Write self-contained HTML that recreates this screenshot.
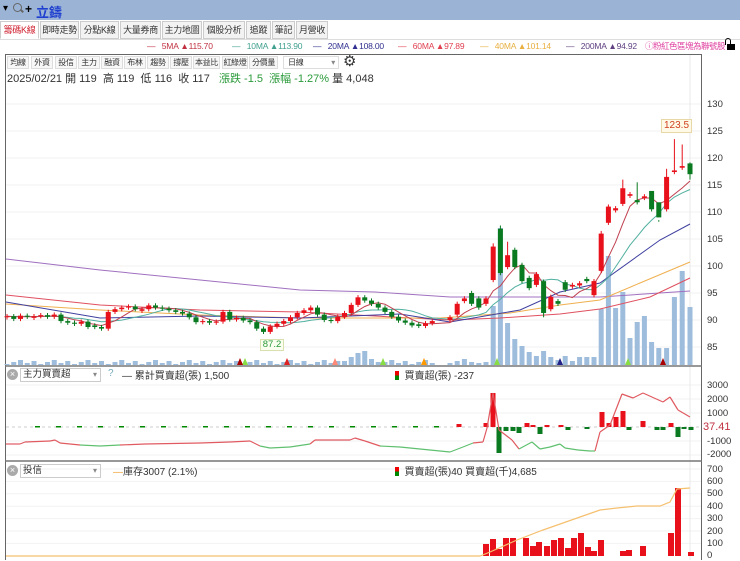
<!DOCTYPE html>
<html><head><meta charset="utf-8">
<style>
*{margin:0;padding:0;box-sizing:border-box}
body{width:740px;height:560px;overflow:hidden;background:#fff;font-family:"Liberation Sans","Noto Sans CJK TC",sans-serif;font-size:11px;color:#333;position:relative}
.a{position:absolute;white-space:nowrap}
#top{position:absolute;left:0;top:0;width:740px;height:20px;background:#9bb4d6}
.tab{position:absolute;top:21px;height:18px;border:1px solid #ccc;background:#f3f3f3;font-size:9px;line-height:16px;text-align:center;color:#333;white-space:nowrap;overflow:hidden;letter-spacing:-0.3px}
.tb{position:absolute;top:56px;height:13px;border:1px solid #ddd;background:#f7f7f7;font-size:8px;line-height:11px;text-align:center;color:#333;white-space:nowrap;overflow:hidden;letter-spacing:-0.3px}
.ax{position:absolute;left:707px;font-size:9.5px;color:#333}
.lg{position:absolute;top:41px;font-size:8.5px;white-space:nowrap;letter-spacing:-0.2px}
</style></head><body>
<div id="top"></div>
<div class="a" style="left:3px;top:3px;font-size:10px;color:#000">▾</div>
<div class="a" style="left:13px;top:3px;width:9px;height:9px;border:1.5px solid #666;border-radius:50%"></div>
<div class="a" style="left:20px;top:10px;width:4px;height:1.5px;background:#666;transform:rotate(45deg)"></div>
<div class="a" style="left:25px;top:2px;font-size:12px;font-weight:bold;color:#000">+</div>
<div class="a" style="left:36px;top:2px;font-size:13px;font-weight:bold;color:#1f3fd0">立鑄</div>

<div class="tab" style="left:0;width:39px;background:#fff;color:#d02030;border-bottom-color:#fff">籌碼K線</div>
<div class="tab" style="left:40px;width:39px">即時走勢</div>
<div class="tab" style="left:80px;width:39px">分點K線</div>
<div class="tab" style="left:120px;width:41px">大量券商</div>
<div class="tab" style="left:162px;width:40px">主力地圖</div>
<div class="tab" style="left:203px;width:42px">個股分析</div>
<div class="tab" style="left:246px;width:25px">追蹤</div>
<div class="tab" style="left:272px;width:23px">筆記</div>
<div class="tab" style="left:296px;width:32px">月營收</div>
<div class="a" style="left:0;top:39px;width:740px;height:1px;background:#ddd"></div>

<div class="lg" style="left:147px;color:#c03040">—&nbsp;&nbsp;&nbsp;5MA ▲115.70</div>
<div class="lg" style="left:232px;color:#40a090">—&nbsp;&nbsp;&nbsp;10MA ▲113.90</div>
<div class="lg" style="left:313px;color:#303090">—&nbsp;&nbsp;&nbsp;20MA ▲108.00</div>
<div class="lg" style="left:398px;color:#e04050">—&nbsp;&nbsp;&nbsp;60MA ▲97.89</div>
<div class="lg" style="left:480px;color:#e8b040">—&nbsp;&nbsp;&nbsp;40MA ▲101.14</div>
<div class="lg" style="left:566px;color:#604080">—&nbsp;&nbsp;&nbsp;200MA ▲94.92</div>
<div class="lg" style="left:645px;top:40px;color:#e040a0;letter-spacing:-0.5px">ⓘ粉紅色區塊為聯號股</div>
<div class="a" style="left:727px;top:44px;width:8px;height:6px;background:#000"></div>
<div class="a" style="left:725px;top:38px;width:6px;height:7px;border:1.5px solid #000;border-bottom:none;border-radius:3px 3px 0 0"></div>

<div class="a" style="left:5px;top:54px;width:697px;height:506px;border-left:1px solid #666;border-top:1px solid #666;border-right:1px solid #666"></div>

<div class="tb" style="left:7px;width:22px">均線</div>
<div class="tb" style="left:31px;width:22px">外資</div>
<div class="tb" style="left:55px;width:22px">投信</div>
<div class="tb" style="left:78px;width:22px">主力</div>
<div class="tb" style="left:101px;width:22px">融資</div>
<div class="tb" style="left:124px;width:22px">布林</div>
<div class="tb" style="left:147px;width:22px">趨勢</div>
<div class="tb" style="left:170px;width:22px">撐壓</div>
<div class="tb" style="left:193px;width:27px">本益比</div>
<div class="tb" style="left:222px;width:26px">紅綠燈</div>
<div class="tb" style="left:249px;width:29px">分價量</div>
<div class="tb" style="left:283px;width:56px;background:#fff;text-align:left;padding-left:4px">日線<span style="position:absolute;right:3px;color:#888">▾</span></div>
<div class="a" style="left:343px;top:52px;font-size:15px;color:#333">⚙</div>
<div class="a" style="left:7px;top:70px;font-size:11px;color:#333">2025/02/21 開 119&nbsp; 高 119&nbsp; 低 116&nbsp; 收 117&nbsp;&nbsp; <span style="color:#2a9a3a">漲跌 -1.5&nbsp; 漲幅 -1.27%</span> 量 4,048</div>

<div class="ax" style="top:99px">130</div><div class="ax" style="top:126px">125</div><div class="ax" style="top:153px">120</div><div class="ax" style="top:180px">115</div><div class="ax" style="top:207px">110</div><div class="ax" style="top:234px">105</div><div class="ax" style="top:261px">100</div><div class="ax" style="top:288px">95</div><div class="ax" style="top:315px">90</div><div class="ax" style="top:342px">85</div>
<div class="ax" style="top:380px">3000</div><div class="ax" style="top:394px">2000</div><div class="ax" style="top:408px">1000</div><div class="ax" style="left:703px;top:421px;font-size:11px;color:#c03040">37.41</div><div class="ax" style="top:436px">-1000</div><div class="ax" style="top:449px">-2000</div>
<div class="ax" style="top:464px">700</div><div class="ax" style="top:476px">600</div><div class="ax" style="top:488px">500</div><div class="ax" style="top:501px">400</div><div class="ax" style="top:513px">300</div><div class="ax" style="top:526px">200</div><div class="ax" style="top:538px">100</div><div class="ax" style="top:550px">0</div>

<svg id="g" class="a" style="left:0;top:0" width="740" height="560"></svg>

<div class="a" style="left:661px;top:119px;width:31px;height:14px;background:#fffae8;border:1px solid #e8d8a8;color:#d04020;font-size:10px;line-height:12px;text-align:center">123.5</div>
<div class="a" style="left:260px;top:339px;width:24px;height:12px;background:#fbfff0;border:1px solid #d8e0b0;color:#2a9a3a;font-size:9.5px;line-height:10px;text-align:center">87.2</div>

<div class="a" style="left:7px;top:369px;width:11px;height:11px;border-radius:50%;background:#aaa;color:#fff;font-size:9px;line-height:11px;text-align:center">×</div>
<div class="a" style="left:20px;top:368px;width:81px;height:14px;border:1px solid #ccc;font-size:9.5px;line-height:12px;padding-left:2px;color:#333">主力買賣超<span style="position:absolute;right:3px;color:#888;font-size:8px">▾</span></div>
<div class="a" style="left:108px;top:368px;color:#7ab;font-size:10px">?</div>
<div class="a" style="left:122px;top:367px;font-size:10px;color:#333">— 累計買賣超(張) 1,500</div>
<div class="a" style="left:395px;top:367px;font-size:10px;color:#333"><span style="display:inline-block;width:4px;height:9px;background:linear-gradient(#e00 50%,#080 50%);vertical-align:-1px"></span>&nbsp; 買賣超(張) -237</div>

<div class="a" style="left:7px;top:465px;width:11px;height:11px;border-radius:50%;background:#aaa;color:#fff;font-size:9px;line-height:11px;text-align:center">×</div>
<div class="a" style="left:20px;top:464px;width:81px;height:14px;border:1px solid #ccc;font-size:9.5px;line-height:12px;padding-left:2px;color:#333">投信<span style="position:absolute;right:3px;color:#888;font-size:8px">▾</span></div>
<div class="a" style="left:113px;top:463px;font-size:10px;color:#333"><span style="color:#f0a030">—</span>庫存3007 (2.1%)</div>
<div class="a" style="left:395px;top:463px;font-size:10px;color:#333"><span style="display:inline-block;width:4px;height:9px;background:linear-gradient(#e00 50%,#080 50%);vertical-align:-1px"></span>&nbsp; 買賣超(張)40 買賣超(千)4,685</div>

<script>
var s='';
function L(x1,y1,x2,y2,c,w,d){s+='<line x1="'+x1+'" y1="'+y1+'" x2="'+x2+'" y2="'+y2+'" stroke="'+c+'" stroke-width="'+(w||1)+'"'+(d?' stroke-dasharray="'+d+'"':'')+'/>';}
function R(x,y,w,h,c){if(h<0){y+=h;h=-h;}s+='<rect x="'+x+'" y="'+y+'" width="'+w+'" height="'+Math.max(h,1)+'" fill="'+c+'"/>';}
function P(pts,c,w){s+='<polyline fill="none" stroke="'+c+'" stroke-width="'+(w||1)+'" points="'+pts.map(function(p){return p.join(',')}).join(' ')+'"/>';}
function py(p){return 104+(130-p)*5.4;}
for(var p=85;p<=130;p+=5)L(6,py(p),701,py(p),'#f0f0f0');
[385,399,413,441,455].forEach(function(y){L(6,y,701,y,'#f2f2f2')});
for(var k=0;k<7;k++)L(6,469+k*12.4,701,469+k*12.4,'#f2f2f2');
L(690,55,690,560,'#e8e8e8');
L(5,366,702,366,'#777',1.5);L(5,461,702,461,'#777',1.5);
var lc=[90.7,90.2,90.8,90.6,90.7,90.9,90.6,91,89.8,89.5,89.3,89.7,88.7,88.7,88.4,91.5,92,92.3,92.5,92,92,92.7,92.3,92.1,91.8,91.5,91.2,90.5,89.6,89.8,89.5,89.7,91.5,90.1,90.4,89.9,89.6,88.4,87.8,88.8,89.3,89.8,90.5,91.3,91.8,92.3,91,90,89.8,90.6,91.3,92.8,94.2,93.6,93,92.3,91.5,90.6,89.9,89.5,89,88.9,89.4,89.8];
var C=[];
for(var i=0;i<lc.length;i++){var o=i?lc[i-1]:90.5;if(Math.abs(o-lc[i])<0.2)o=lc[i]+(i%2?0.3:-0.3);C.push([7+i*6.75,o,lc[i]]);}
var rr=[[90,90.5],[91,93],[93.5,94],[95,93],[94,92.3],[93,94],[97.4,103.6],[106.9,98.7],[99.8,102],[103,99.8],[100.2,97.2],[97.8,95.9],[96.5,98.5],[97.2,91.3],[92,94.3],[93.5,93],[97,95.6],[96.2,96.5],[96.4,96.8],[97.6,97.2],[94.6,97.2],[99.1,106],[108,111],[110.3,110.7],[111.5,114.4],[113,113.3],[112.2,111.8],[112.6,112.9],[113.9,110.5],[111.8,109],[110.5,116.5],[117.4,117.7],[118.2,118.5],[119,117]];
var hi={6:104.2,7:107.5,8:104.5,21:106.5,24:116,26:115.5,28:113.5,30:118,31:123.5,32:122.5,33:119.2,13:97.5,29:108.5};
var lo={13:90.5,29:108.2,33:116};
for(var j=0;j<rr.length;j++){var x=450+j*7.2;if(j>=30)x=450+29*7.2+(j-29)*(690-450-29*7.2)/4;C.push([x,rr[j][0],rr[j][1],hi[j],lo[j]]);}
var vol=[];for(var i=0;i<C.length;i++)vol.push(1+((i*7)%5));
[[50,4],[51,8],[52,12],[53,14],[54,6],[55,3]].forEach(function(a){vol[a[0]]=a[1]});
var rv=[2,4,6,3,2,3,59,137,42,26,19,13,9,14,8,5,9,4,8,8,8,56,109,57,73,27,43,49,23,17,17,68,94,58,22];
for(var j=0;j<rr.length;j++)vol[lc.length+j]=rv[j];
for(var i=0;i<C.length;i++)R(C[i][0]-2.5,365-vol[i],5,vol[i],'#9ebcdc');
P([[6,259],[100,270],[200,280],[300,290],[375,292],[450,297],[600,297],[690,291]],'#a070c0');
P([[6,295],[100,305],[200,310],[300,312],[450,320],[500,318],[560,314],[600,309],[650,297],[690,278]],'#e05060');
P([[6,304],[100,310],[200,315],[300,318],[440,318],[510,313],[560,305],[600,300],[640,283],[690,262]],'#f0b050');
P([[6,302],[100,318],[200,316],[300,318],[400,314],[450,322],[520,310],[560,292],[600,283],[660,240],[690,224]],'#4040a0');
var cl=C.map(function(c){return c[2]});
function ma(n,col){var pts=[];for(var i=0;i<cl.length;i++){var sm=0;for(var k=0;k<n;k++)sm+=cl[Math.max(0,i-k)];pts.push([C[i][0],py(sm/n).toFixed(1)]);}P(pts,col);}
ma(10,'#50b0a0');ma(5,'#c04050');
for(var i=0;i<C.length;i++){var c=C[i],o=c[1],cc=c[2],up=cc>=o,col=up?'#e8101a':'#0a7a20';var h=c[3]||Math.max(o,cc)+0.4,l=c[4]||Math.min(o,cc)-0.4;L(c[0],py(h),c[0],py(l),col);R(c[0]-2.5,py(Math.max(o,cc)),5,py(Math.min(o,cc))-py(Math.max(o,cc)),col);}
[[245,'#8d4'],[240,'#a00'],[287,'#d22'],[335,'#f87'],[383,'#8d4'],[424,'#f90'],[497,'#8d4'],[560,'#228'],[628,'#8d4'],[663,'#a00']].forEach(function(t){s+='<polygon points="'+(t[0]-3)+',365 '+(t[0]+3)+',365 '+t[0]+',358" fill="'+t[1]+'"/>';});
L(6,427,701,427,'#ccc',1,'3,3');
for(var x=25;x<450;x+=9+(x%3)){var r=(x*13)%7;if(r<3)R(x,426,5,1.5,r==0?'#080':'#e33');}
[[459,-3,'r'],[486,-4,'r'],[493,-34,'r'],[499,26,'g'],[506,4,'g'],[513,4,'g'],[519,6,'g'],[527,-4,'r'],[533,-2,'r'],[540,7,'g'],[547,-2,'r'],[561,-2,'r'],[568,3,'g'],[587,2,'g'],[602,-15,'r'],[609,-4,'r'],[616,-10,'r'],[623,-16,'r'],[629,3,'g'],[643,-6,'r'],[657,3,'g'],[663,3,'g'],[671,-4,'r'],[678,10,'g'],[684,2,'g'],[691,3,'g']].forEach(function(b){R(b[0]-2.5,427,5,b[1],b[2]=='r'?'#e8101a':'#0a7a20')});
var cum=[[6,444],[20,444],[25,442],[50,441],[55,440],[60,443],[80,445],[100,446],[120,445],[145,444],[200,443],[230,442],[250,441],[260,446],[270,448],[290,447],[310,444],[315,440],[350,440],[355,438],[365,441],[380,446],[400,447],[420,449],[440,451],[450,452],[463,447],[473,443],[483,442],[487,428],[493,393],[499,430],[512,440],[519,449],[532,442],[540,449],[550,447],[560,444],[565,448],[578,450],[590,451],[595,451],[600,432],[610,425],[622,394],[633,398],[643,393],[663,402],[670,397],[678,410],[690,417]];
for(var i=1;i<cum.length;i++){var m=(cum[i][1]+cum[i-1][1])/2;L(cum[i-1][0],cum[i-1][1],cum[i][0],cum[i][1],m>444.5?'#60c070':'#e05a60',1.2);}
[[486,544],[493,539],[499,549],[506,538],[513,538],[526,538],[533,546],[539,542],[547,546],[554,540],[561,538],[568,548],[574,538],[581,533],[588,547],[594,551],[601,540],[623,551],[629,550],[643,546],[671,533],[678,488],[691,552]].forEach(function(b){R(b[0]-3,b[1],6,556-b[1],'#e8101a')});
P([[6,556],[480,556],[490,552],[517,540],[543,530],[563,523],[580,517],[600,510],[617,508],[637,506],[660,506],[670,502],[677,489],[690,488]],'#f5c070',1.2);
document.getElementById('g').innerHTML=s;
</script>
</body></html>
